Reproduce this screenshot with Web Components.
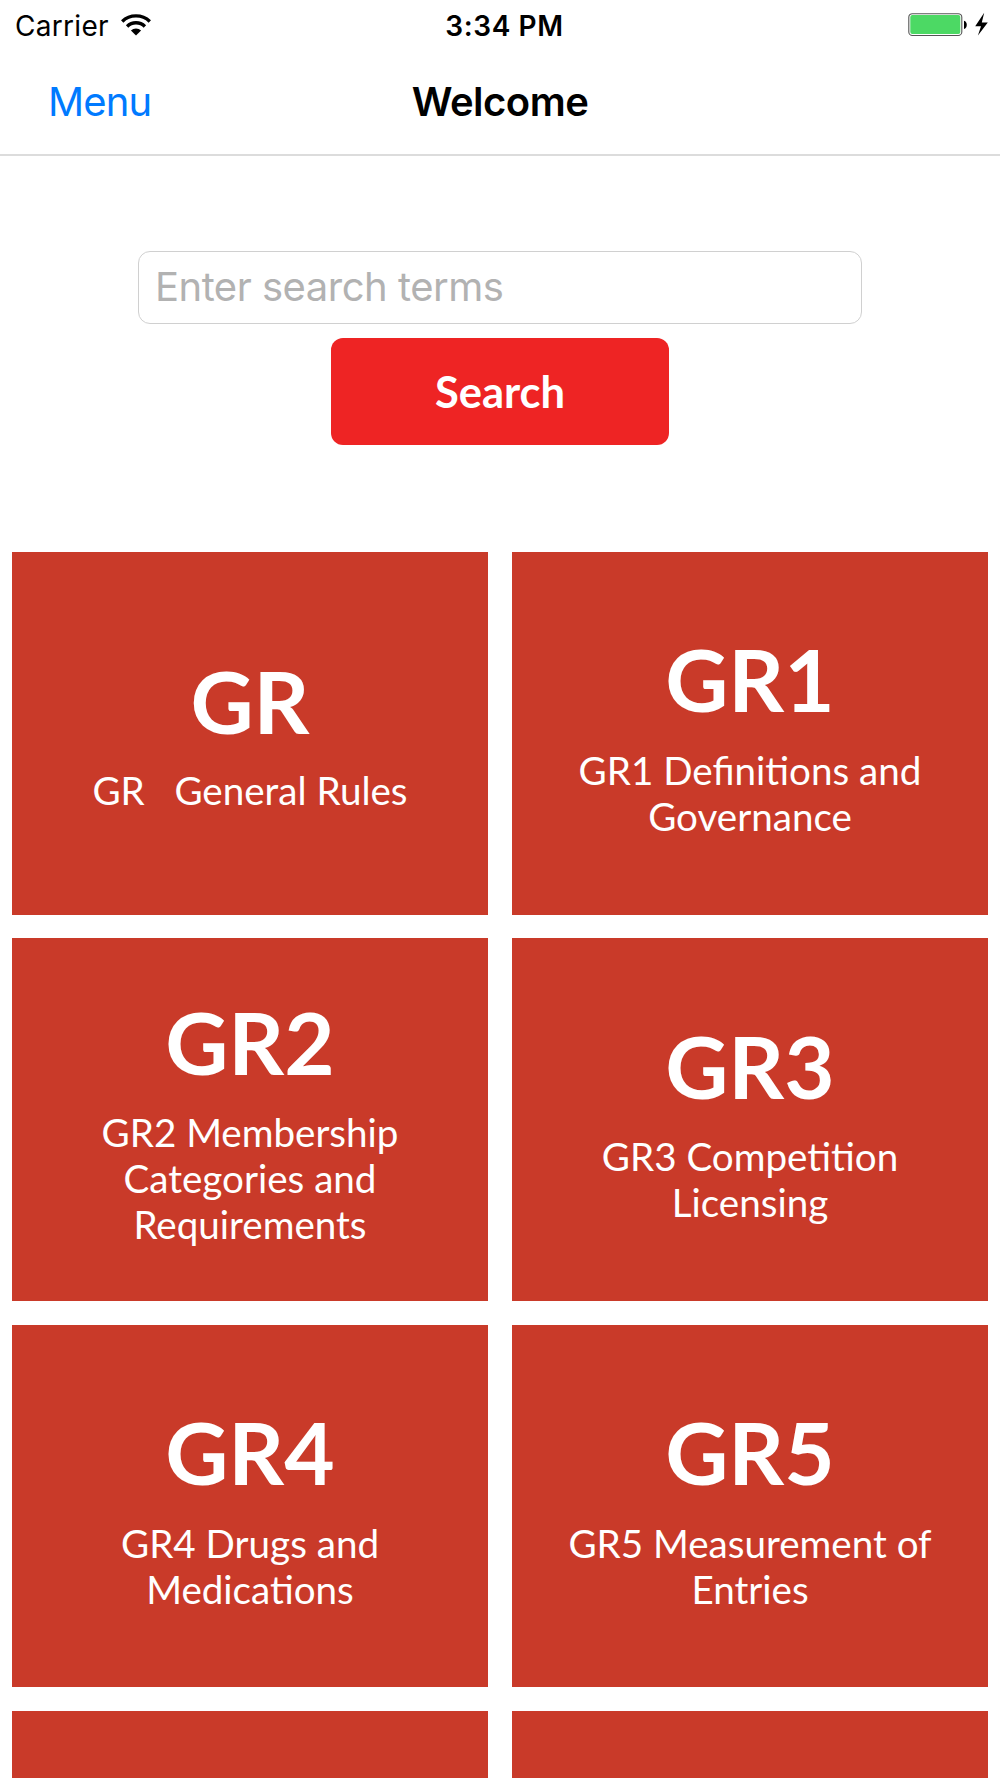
<!DOCTYPE html>
<html lang="en">
<head>
<meta charset="utf-8">
<title>Welcome</title>
<style>
html, body { margin: 0; height: 1778px; overflow: hidden; background: #fff; }
</style>
</head>
<body>
<rule-app></rule-app>
<script>
function define(name, html) {
  const template = document.createElement('template');
  template.innerHTML = html;
  customElements.define(name, class extends HTMLElement {
    constructor() {
      super();
      this.attachShadow({ mode: 'open' }).append(template.content.cloneNode(true));
    }
  });
}

define('status-bar', `
<style>
:host { display: grid; grid-template-columns: 1fr auto 1fr; align-items: center; height: 50px; padding: 0 11px 0 15px; box-sizing: border-box; font: 28px/48px Inter, "Liberation Sans", sans-serif; color: #000; }
.left { display: flex; align-items: center; gap: 12px; }
.left span, .time { padding-top: 2px; }
.carrier { letter-spacing: 0.3px; }
.time { font-weight: 600; font-size: 28px; letter-spacing: 0.6px; padding-left: 5px; }
.right { display: flex; justify-content: flex-end; align-items: center; }
svg { display: block; }
</style>
<div class="left"><span class="carrier">Carrier</span>
<svg width="30" height="22" viewBox="0 0 30 22"><g fill="none" stroke="#000" stroke-width="3.4"><path d="M1.2 7.4A20 20 0 0 1 28.8 7.4"/><path d="M6.1 12.5A12.6 12.6 0 0 1 23.9 12.5"/></g><path d="M15 21.6L9.9 16.6A7.2 7.2 0 0 1 20.1 16.6Z"/></svg></div>
<span class="time">3:34 PM</span>
<div class="right"><svg width="81" height="26" viewBox="0 0 81 26"><rect x=".8" y="1.7" width="53" height="21.8" rx="3.6" fill="#fff" stroke="#555" stroke-width="1.1"/><rect x="2.3" y="3.1" width="50" height="19" rx="2" fill="#4cd964"/><path d="M56 8.7C59.7 9.6 59.7 16 56 16.9Z"/><path d="M76.2.8L67.2 14.2H73L69.9 23.6L79.8 10.5H73.8Z"/></svg></div>
`);

define('nav-bar', `
<style>
:host { display: grid; grid-template-columns: 1fr auto 1fr; align-items: center; height: 106px; padding: 0 48px; box-sizing: border-box; border-bottom: 2px solid #dcdcdc; font: 40px/48px Inter, "Liberation Sans", sans-serif; }
::slotted(a) { color: #007aff; text-decoration: none; letter-spacing: -0.9px; }
h1 { margin: 0; font-size: 40px; font-weight: 600; letter-spacing: -0.5px; color: #000; }
</style>
<slot name="action"></slot>
<h1><slot></slot></h1>
`);

define('search-form', `
<style>
:host { display: flex; flex-direction: column; align-items: center; padding: 95px 138px 0; height: 395.7px; box-sizing: border-box; }
input { width: 724px; height: 73px; box-sizing: border-box; border: 1px solid #d0d0d0; border-radius: 12px; padding: 0 16px 3px; margin: 0 0 14px; outline: 0; background: #fff; font: 40px/48px Inter, "Liberation Sans", sans-serif; letter-spacing: -0.5px; }
input::placeholder { color: #b2b2b2; opacity: 1; }
button { width: 338px; height: 106.7px; border: 0; border-radius: 12px; padding: 0; background: #ee2424; color: #fff; font: bold 43.5px/52px Lato, Carlito, sans-serif; }
</style>
<input placeholder="Enter search terms">
<button>Search</button>
`);

define('rule-tile', `
<style>
:host { display: flex; flex-direction: column; justify-content: center; align-items: center; gap: 14.6px; height: 362.9px; padding: 0 48px 4px; box-sizing: border-box; background: #c93a29; color: #fff; text-align: center; font-family: Lato, Carlito, sans-serif; }
:host([lines="2"]) { gap: 15.2px; padding-bottom: 0; }
:host([lines="3"]) { gap: 15.2px; padding-bottom: 2px; }
h2 { margin: 0; font-size: 87px; line-height: 104.3px; font-weight: bold; }
p { margin: 0; font-size: 38.6px; line-height: 46.2px; white-space: pre-line; }
</style>
<h2><slot name="code"></slot></h2>
<p><slot></slot></p>
`);

define('rule-grid', `
<style>
:host { display: grid; grid-template-columns: 1fr 1fr; gap: 23.55px 24px; padding: 0 12px; }
</style>
<slot></slot>
`);

define('rule-app', `
<style>:host { display: block; width: 1000px; height: 1778px; overflow: hidden; }</style>
<status-bar></status-bar>
<nav-bar><a slot="action">Menu</a>Welcome</nav-bar>
<search-form></search-form>
<rule-grid>
<rule-tile><span slot="code">GR</span>GR&nbsp;&nbsp; General Rules</rule-tile>
<rule-tile lines="2"><span slot="code">GR1</span>GR1 Definitions and
Governance</rule-tile>
<rule-tile lines="3"><span slot="code">GR2</span>GR2 Membership
Categories and
Requirements</rule-tile>
<rule-tile lines="2"><span slot="code">GR3</span>GR3 Competition
Licensing</rule-tile>
<rule-tile lines="2"><span slot="code">GR4</span>GR4 Drugs and
Medications</rule-tile>
<rule-tile lines="2"><span slot="code">GR5</span>GR5 Measurement of
Entries</rule-tile>
<rule-tile></rule-tile>
<rule-tile></rule-tile>
</rule-grid>
`);
</script>
</body>
</html>
